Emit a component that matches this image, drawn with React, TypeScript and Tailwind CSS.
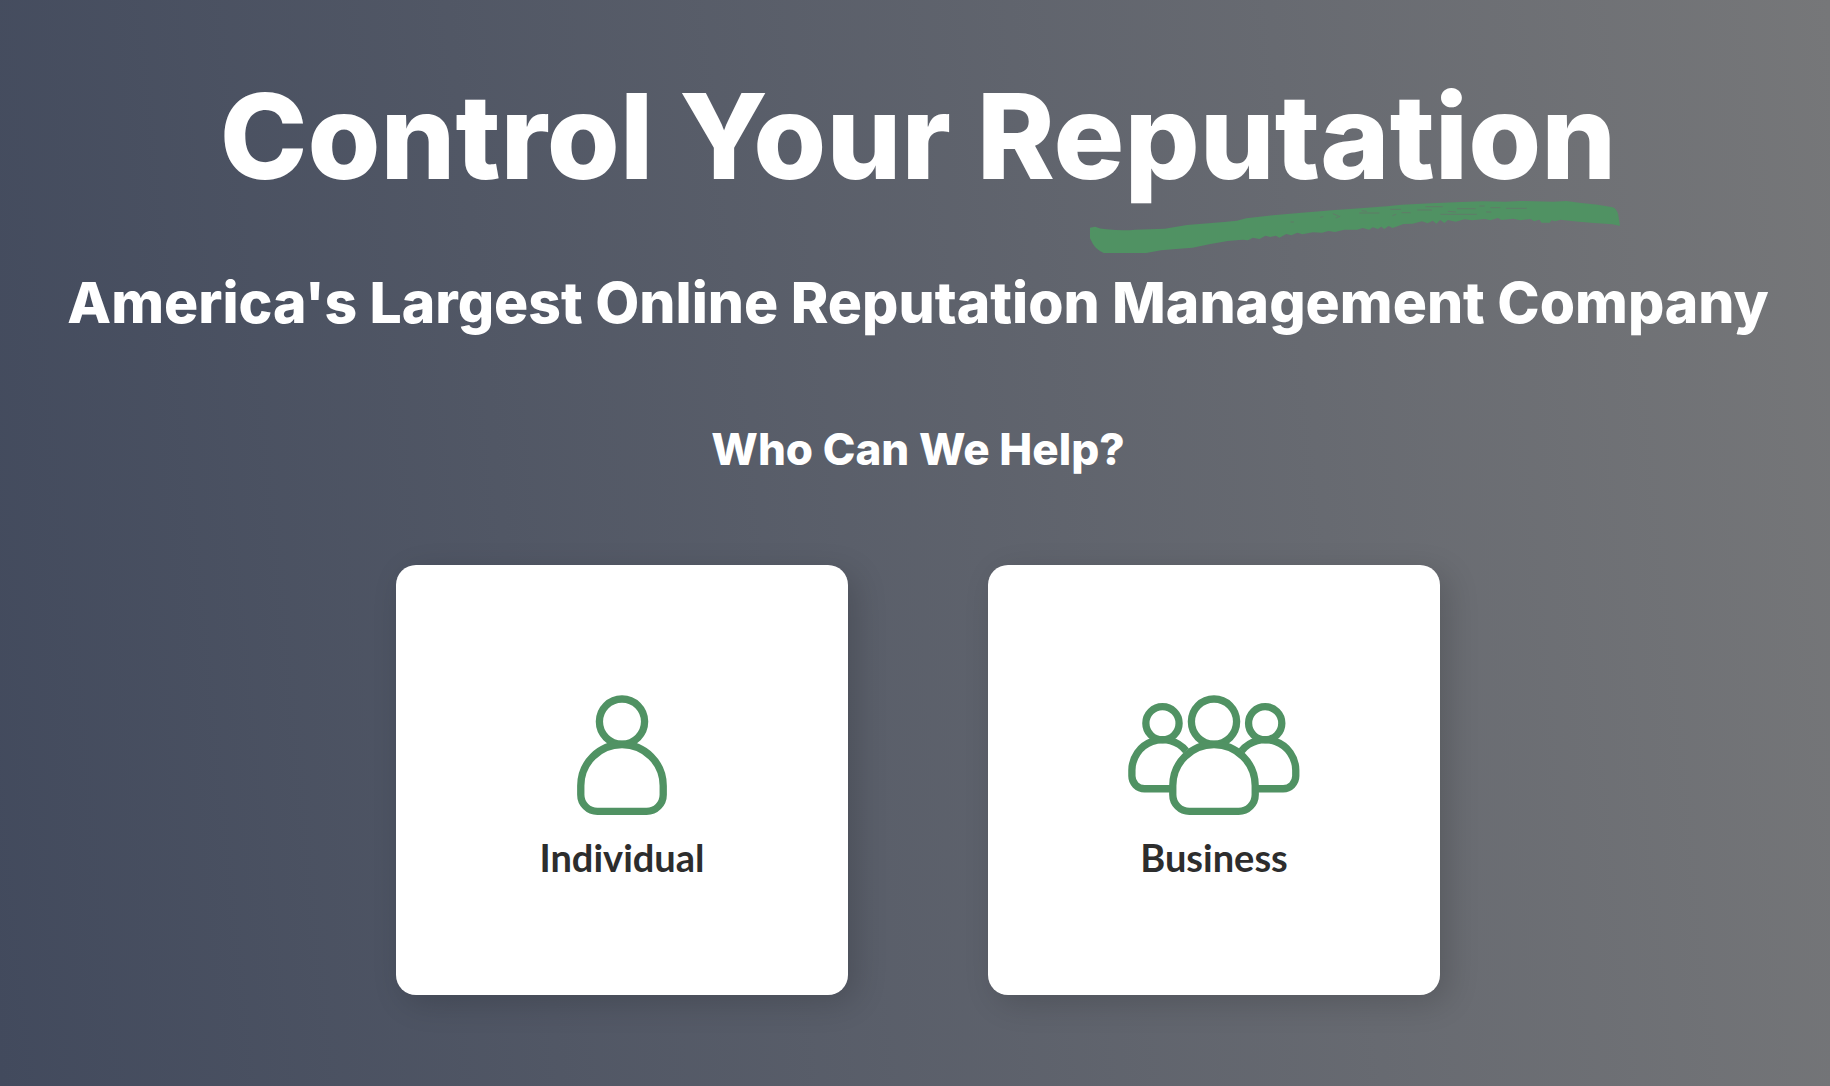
import React from "react";

function BrushUnderline() {
  return (
    <svg viewBox="78 63 1432 156" preserveAspectRatio="none" className="h-[52px] w-[530px]" aria-hidden="true">
      <path
        fill="#509263"
        d="M78 143 L92 140 Q104 147 122 148 Q170 153 200 149 L280 146 L340 135 L440 126 L475 122 L500 115 L560 107 L650 98 L700 94 L740 90 L790 86 L880 79 L920 74 L1000 70 L1080 66 L1140 64 L1200 65 L1240 63 L1330 65 L1365 63 L1400 68 L1450 74 L1490 82 Q1500 85 1505 103 L1510 138 L1490 133 L1440 129 L1400 125 L1360 121 L1350 119 L1335 124 L1325 121 L1320 128 L1298 128 L1292 119 L1278 124 L1268 117 L1240 121 L1222 116 L1190 120 L1180 114 L1160 121 L1145 117 L1110 121 L1090 118 L1066 125 L1045 120 L1036 129 L1024 120 L1014 131 L1004 122 L990 130 L975 124 L950 131 L925 132 L905 140 L895 144 L885 138 L873 147 L865 140 L856 147 L842 142 L832 149 L815 144 L800 149 L765 149 L740 156 L722 153 L705 158 L680 157 L652 163 L638 158 L622 166 L608 162 L590 173 L580 167 L565 171 L552 167 L536 177 L518 173 L505 181 L490 179 L450 183 L400 193 L355 203 L310 207 L270 211 L230 219 L115 219 Q95 209 86 192 L78 175 Z"
      />
      <g stroke="#69706c" strokeOpacity="0.75" strokeWidth="2.5" fill="none">
        <path d="M734 101 l16 7 M742 114 l12 -5 M620 126 h9 M812 92 l14 2 M805 99 h55 M890 88 h28 M895 107 l10 -4 M920 98 h24 M962 90 h40 M985 80 h46 M1025 103 h98 M1045 94 l22 2 M1070 86 h50 M1148 96 h14 M1160 83 h26 M1202 85 h56 M1130 78 h14 M700 112 l8 -2" />
      </g>
    </svg>
  );
}

const person = "M62 317 A124 124 0 0 1 310 317 V344 A50 50 0 0 1 260 394 H112 A50 50 0 0 1 62 344 Z";

function IndividualIcon() {
  return (
    <svg viewBox="51 44 270 361" className="h-[120px] w-[90px]" fill="none" stroke="#509263" strokeWidth="22" aria-hidden="true">
      <circle cx="186" cy="124" r="68" />
      <path d={person} />
    </svg>
  );
}

function BusinessIcon() {
  return (
    <svg viewBox="55 44 516 361" className="h-[120px] w-[172px]" fill="none" stroke="#509263" strokeWidth="22" aria-hidden="true">
      <circle cx="158" cy="129" r="50" />
      <path d="M188 326 H104 A38 38 0 0 1 66 288 V271 A92 92 0 0 1 229 212" />
      <circle cx="467" cy="129" r="50" />
      <path d="M438 326 H521 A38 38 0 0 0 559 288 V271 A92 92 0 0 0 396 212" />
      <circle cx="313" cy="124" r="68" />
      <path d={person} transform="translate(127 0)" />
    </svg>
  );
}

function Card({ label, children }: { label: string; children: React.ReactNode }) {
  return (
    <a
      href="#"
      className="flex h-[430px] w-full max-w-[452px] flex-col items-center justify-center gap-[18px] rounded-[20px] bg-white pt-4 shadow-[8px_8px_32px_rgba(0,0,0,0.16)]"
    >
      {children}
      <span className="font-[Lato,sans-serif] text-[38px] leading-[48px] font-bold text-[#2d2d2d]">{label}</span>
    </a>
  );
}

export default function App() {
  return (
    <main className="flex min-h-screen flex-col items-center bg-[linear-gradient(84deg,#424a5d_0%,#767779_100%)] pt-14 pb-10 pl-1.5 font-[Inter,sans-serif] text-white">
      <h1 className="relative text-[118px] leading-[160px] font-extrabold whitespace-nowrap">
        Control Your Reputation
        <span className="absolute top-[145px] -right-1 leading-none">
          <BrushUnderline />
        </span>
      </h1>
      <h2 className="mt-[45px] text-[57px] leading-[84px] font-extrabold whitespace-nowrap">
        America's Largest Online Reputation Management Company
      </h2>
      <h3 className="mt-[76px] text-[44px] leading-[56px] font-extrabold">Who Can We Help?</h3>
      <div className="mt-[88px] flex w-full justify-center gap-[140px]">
        <Card label="Individual">
          <IndividualIcon />
        </Card>
        <Card label="Business">
          <BusinessIcon />
        </Card>
      </div>
    </main>
  );
}
